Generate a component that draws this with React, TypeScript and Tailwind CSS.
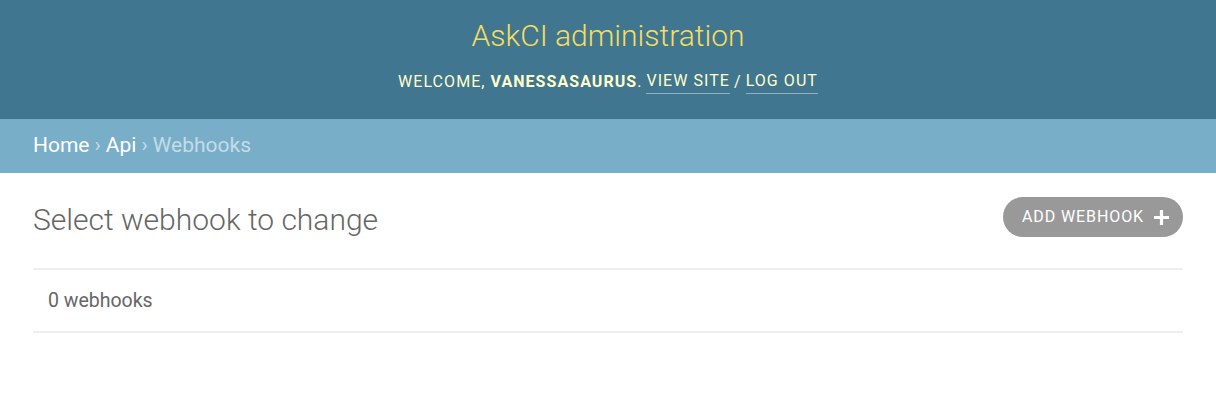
import React from "react";

const App = () => {
    const crumbs = ["Home", "Api"];
    return (
        <div className="min-h-[414px] bg-white font-['Roboto',sans-serif] font-light text-[#333]">
            <header className="h-[119px] bg-[#417690] flex flex-col items-center pt-[16px]">
                <h1 className="text-[30px] leading-[40px] text-[#f5dd5d] font-light">AskCI administration</h1>
                <div className="mt-[13px] text-[16px] tracking-[1.05px] uppercase text-[#ffc] font-normal flex items-center gap-[4px]">
                    <span>
                        Welcome, <strong className="font-bold">vanessasaurus</strong>.
                    </span>
                    <a className="border-b border-[#8fb1c2] leading-[24px]">View site</a>
                    <span>/</span>
                    <a className="border-b border-[#8fb1c2] leading-[24px]">Log out</a>
                </div>
            </header>
            <nav className="h-[54px] bg-[#79aec8] flex items-center px-[33px] text-[21px] font-normal text-white">
                {crumbs.map((c) => (
                    <React.Fragment key={c}>
                        <a>{c}</a>
                        <span className="px-[5px] text-[#c4dce8]">›</span>
                    </React.Fragment>
                ))}
                <span className="text-[#c4dce8]">Webhooks</span>
            </nav>
            <main className="px-[33px] pt-[25px]">
                <div className="flex items-center justify-between">
                    <h2 className="text-[30px] leading-[44px] text-[#666] font-light">Select webhook to change</h2>
                    <a className="h-[40px] rounded-full bg-[#999] text-white uppercase font-normal text-[16px] tracking-[0.9px] flex items-center gap-[10px] pl-[19px] pr-[14px] mt-[-6px]">
                        Add webhook
                        <svg width="15" height="15" viewBox="0 0 14 14">
                            <path d="M5.5 0h3v5.5H14v3H8.5V14h-3V8.5H0v-3h5.5z" fill="white" />
                        </svg>
                    </a>
                </div>
                <div className="mt-[26px] border-t-2 border-b-2 border-[#eee] h-[65px] flex items-center px-[15px] text-[19.5px] font-normal text-[#666]">
                    0 webhooks
                </div>
            </main>
        </div>
    );
};

export default App;
